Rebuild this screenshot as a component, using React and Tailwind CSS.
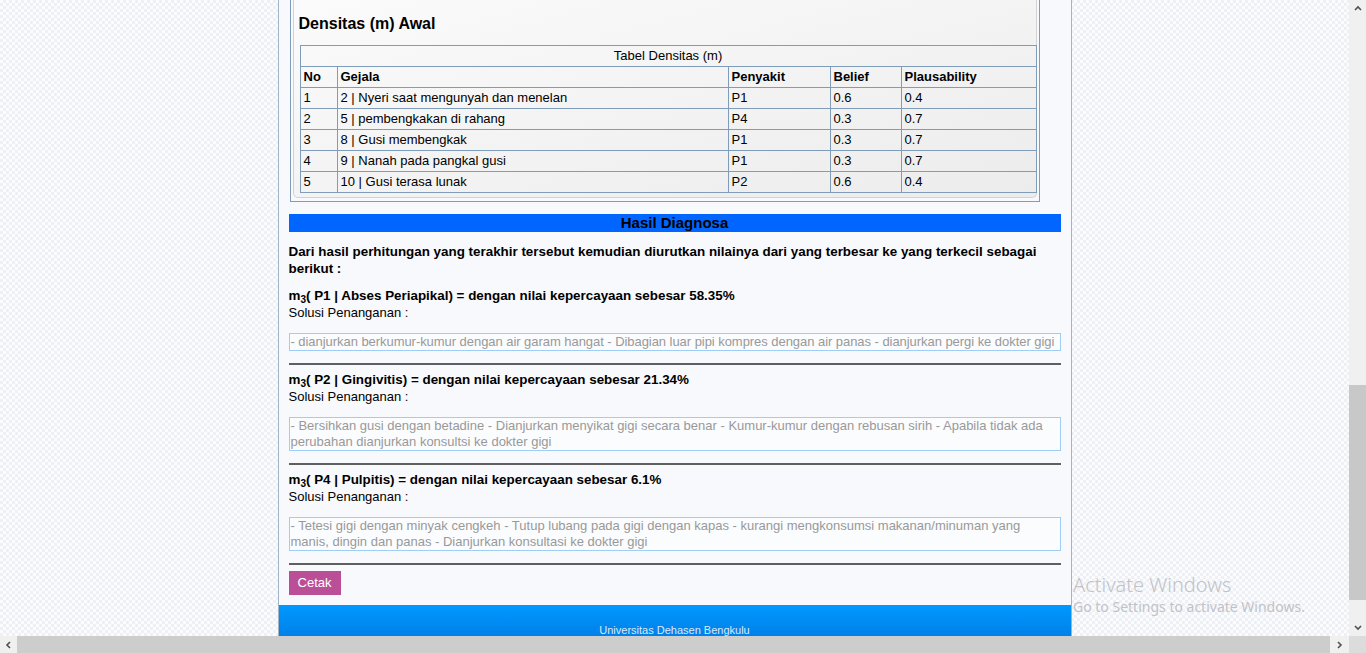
import React from "react";

const rows = [
  { no: 1, gejala: "2 | Nyeri saat mengunyah dan menelan", penyakit: "P1", belief: "0.6", plaus: "0.4" },
  { no: 2, gejala: "5 | pembengkakan di rahang", penyakit: "P4", belief: "0.3", plaus: "0.7" },
  { no: 3, gejala: "8 | Gusi membengkak", penyakit: "P1", belief: "0.3", plaus: "0.7" },
  { no: 4, gejala: "9 | Nanah pada pangkal gusi", penyakit: "P1", belief: "0.3", plaus: "0.7" },
  { no: 5, gejala: "10 | Gusi terasa lunak", penyakit: "P2", belief: "0.6", plaus: "0.4" },
];

const hasil = [
  {
    label: "P1 | Abses Periapikal",
    nilai: "58.35%",
    oneLine: true,
    solusi:
      "- dianjurkan berkumur-kumur dengan air garam hangat - Dibagian luar pipi kompres dengan air panas - dianjurkan pergi ke dokter gigi",
  },
  {
    label: "P2 | Gingivitis",
    nilai: "21.34%",
    solusi:
      "- Bersihkan gusi dengan betadine - Dianjurkan menyikat gigi secara benar - Kumur-kumur dengan rebusan sirih - Apabila tidak ada perubahan dianjurkan konsultsi ke dokter gigi",
  },
  {
    label: "P4 | Pulpitis",
    nilai: "6.1%",
    solusi:
      "- Tetesi gigi dengan minyak cengkeh - Tutup lubang pada gigi dengan kapas - kurangi mengkonsumsi makanan/minuman yang manis, dingin dan panas - Dianjurkan konsultasi ke dokter gigi",
  },
];

const cell = "border border-[#7f9db9] px-[3px] py-0 leading-[20px] align-middle";

function Chevron({ dir }) {
  const pts = {
    up: "2,6 5,3 8,6",
    down: "2,3 5,6 8,3",
    left: "6,2 3,5 6,8",
    right: "3,2 6,5 3,8",
  }[dir];
  return (
    <svg width="10" height="10" viewBox="0 0 10 10">
      <polyline points={pts} fill="none" stroke="#505050" strokeWidth="1.6" />
    </svg>
  );
}

export default function App() {
  return (
    <div className="flex h-[653px] w-[1366px] flex-col overflow-hidden font-['Liberation_Sans',Arial,sans-serif] text-[13px] text-black">
      <div className="flex h-[636px]">
        {/* page */}
        <div className="relative h-[636px] w-[1349px] overflow-hidden bg-[repeating-conic-gradient(#eef0f6_0%_25%,#fbfcfe_0%_50%)] bg-[length:6px_6px]">
          <div className="mx-auto w-[794px] border-x border-[#a3b3c6] bg-[#f7f9fc]">
            <div className="px-[10px]">
              {/* Densitas panel */}
              <div className="ml-[1px] w-[750px] border-x border-b border-[#7f9db9] px-[2px] pb-[3px]">
                <div className="rounded-b-[5px] border-x border-b border-[#d2d2d2] bg-gradient-to-br from-[#fbfbfb] to-[#ececec] pb-[4px] pl-[6px] pr-[1px] pt-[15px]">
                  <h2 className="-ml-[1px] text-[16px] font-bold leading-[18px]">Densitas (m) Awal</h2>
                  <table className="mt-[12px] w-[736px] table-fixed border-collapse">
                    <colgroup>
                      <col className="w-[37px]" />
                      <col className="w-[391px]" />
                      <col className="w-[102px]" />
                      <col className="w-[71px]" />
                      <col className="w-[135px]" />
                    </colgroup>
                    <thead>
                      <tr>
                        <th colSpan={5} className={`${cell} text-center font-normal`}>
                          Tabel Densitas (m)
                        </th>
                      </tr>
                      <tr className="font-bold">
                        <th className={`${cell} text-left`}>No</th>
                        <th className={`${cell} text-left`}>Gejala</th>
                        <th className={`${cell} text-left`}>Penyakit</th>
                        <th className={`${cell} text-left`}>Belief</th>
                        <th className={`${cell} text-left`}>Plausability</th>
                      </tr>
                    </thead>
                    <tbody>
                      {rows.map((r) => (
                        <tr key={r.no}>
                          <td className={cell}>{r.no}</td>
                          <td className={cell}>{r.gejala}</td>
                          <td className={cell}>{r.penyakit}</td>
                          <td className={cell}>{r.belief}</td>
                          <td className={cell}>{r.plaus}</td>
                        </tr>
                      ))}
                    </tbody>
                  </table>
                </div>
              </div>

              {/* Hasil Diagnosa */}
              <div className="mt-[12px] h-[18px] bg-[#0066ff] text-center text-[15px] font-bold leading-[18px]">Hasil Diagnosa</div>

              <p className="mt-[11px] text-[13.4px] font-bold leading-[17px]">
                Dari hasil perhitungan yang terakhir tersebut kemudian diurutkan nilainya dari yang terbesar ke yang terkecil sebagai berikut :
              </p>

              {hasil.map((h, i) => (
                <div key={h.label} className={i === 0 ? "mt-[10px]" : "mt-[6px]"}>
                  <div className="h-[17px] text-[13.4px] font-bold leading-[17px]">
                    m<sub className="text-[10px] leading-none">3</sub>( {h.label}) = dengan nilai kepercayaan sebesar {h.nilai}
                  </div>
                  <div className="leading-[17px]">Solusi Penanganan :</div>
                  <div
                    className={`mt-[12px] ${
                      h.oneLine ? "overflow-hidden whitespace-nowrap tracking-[-0.05px]" : ""
                    } border border-[#9fcdf5] bg-[#fbfcfe] px-[1px] leading-[16px] text-[#999999]`}
                  >
                    {h.solusi}
                  </div>
                  <div className="mt-[12px] h-[2px] bg-[#5f5f5f]" />
                </div>
              ))}

              <button className="mt-[6px] h-[24px] w-[52px] bg-[#bb4f97] text-[13px] text-white">Cetak</button>
            </div>

            {/* footer */}
            <div className="mt-[10px] h-[48px] bg-gradient-to-b from-[#0099ff] to-[#0073dd] pt-[18px] text-center text-[11px] leading-[14px] text-[#dbe9f9]">
              Universitas Dehasen Bengkulu
            </div>
          </div>

          {/* Windows watermark */}
          <div className="pointer-events-none absolute left-[1073px] top-[573px] font-['Noto_Sans',sans-serif] text-[#c2c2c6]">
            <div className="text-[20px] font-light leading-[24px]">Activate Windows</div>
            <div className="text-[14px] leading-[20px]">Go to Settings to activate Windows.</div>
          </div>
        </div>

        {/* vertical scrollbar */}
        <div className="flex h-[636px] w-[17px] flex-col bg-[#f0f0f0]">
          <div className="flex h-[17px] items-center justify-center">
            <Chevron dir="up" />
          </div>
          <div className="h-[368px]" />
          <div className="mx-auto h-[215px] w-[17px] bg-[#c8c8c8]" />
          <div className="flex-1" />
          <div className="flex h-[17px] items-center justify-center">
            <Chevron dir="down" />
          </div>
        </div>
      </div>

      {/* horizontal scrollbar */}
      <div className="flex h-[17px] bg-[#f0f0f0]">
        <div className="flex w-[17px] items-center justify-center">
          <Chevron dir="left" />
        </div>
        <div className="w-[1313px] bg-[#cdcdcd]" />
        <div className="flex w-[19px] items-center justify-center">
          <Chevron dir="right" />
        </div>
        <div className="w-[17px] bg-[#dcdcdc]" />
      </div>
    </div>
  );
}
